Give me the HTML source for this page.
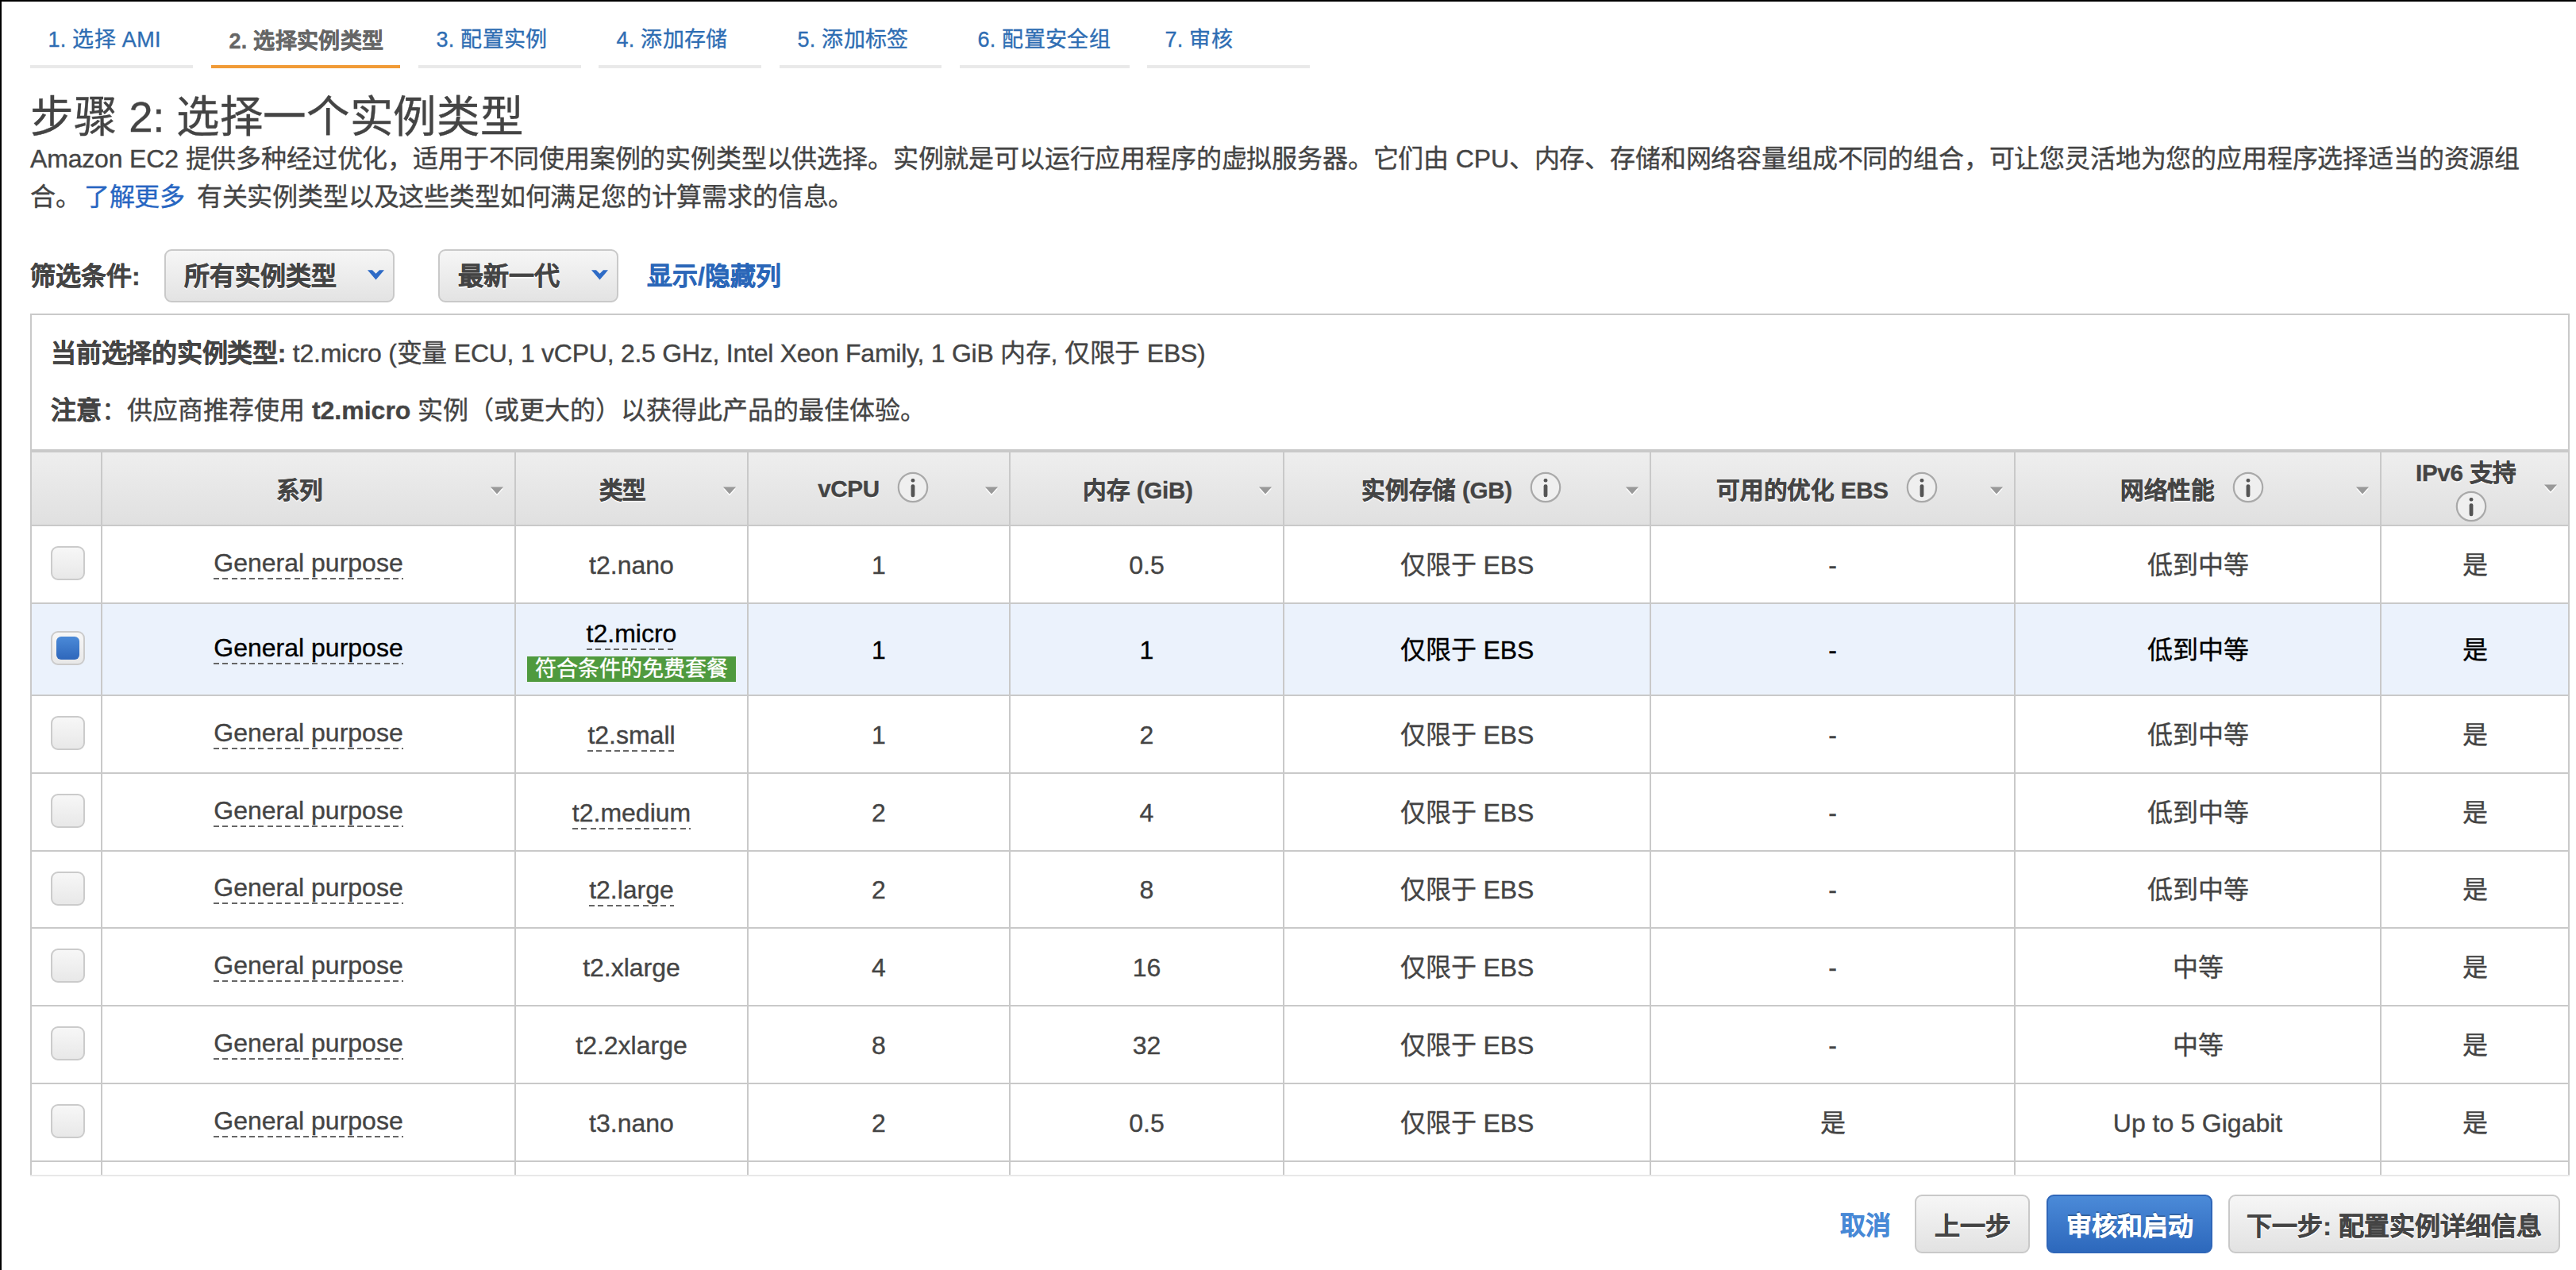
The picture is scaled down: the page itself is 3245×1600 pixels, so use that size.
<!DOCTYPE html>
<html lang="zh-CN"><head><meta charset="utf-8">
<style>
*{box-sizing:border-box;margin:0;padding:0}
html,body{width:3245px;height:1600px;overflow:hidden;background:#fff}
body{font-family:"Liberation Sans",sans-serif;color:#444;position:relative}
#bt{position:absolute;left:0;top:0;width:3245px;height:2px;background:#000;z-index:50}
#bl{position:absolute;left:0;top:0;width:2px;height:1600px;background:#000;z-index:50}
.tab{position:absolute;top:0;height:86px}
.tab .t{position:absolute;left:22.5px;top:31.5px;font-size:27px;letter-spacing:0.3px;line-height:36px;color:#2e6db3;white-space:nowrap}
.tab .u{position:absolute;left:0;right:0;top:82px;height:4px;background:#e9e9e9}
.tab.on .t{color:#666;font-weight:bold;top:33.5px}
.tab.on .u{background:#f19b36}
h2{position:absolute;left:38px;top:112.5px;font-size:54.5px;letter-spacing:-0.3px;line-height:70px;font-weight:normal;color:#444;white-space:nowrap}
.desc{position:absolute;left:38px;top:176px;width:3180px;font-size:32px;letter-spacing:-0.17px;line-height:48px;color:#444}
.desc a{color:#2766c2;text-decoration:none}
.flabel{position:absolute;left:38px;top:324px;font-size:32px;line-height:48px;font-weight:bold;color:#444;white-space:nowrap}
.sel{position:absolute;top:314px;height:67px;border:2px solid #c9c9c9;border-radius:9px;background:linear-gradient(#f6f6f6,#e3e3e3)}
.sel .t{position:absolute;top:8px;font-size:32px;line-height:48px;font-weight:bold;color:#444;white-space:nowrap;text-shadow:0 2px 0 #fff}
.chev{position:absolute;top:24px;width:21px;height:13px}
.showhide{position:absolute;left:815px;top:324px;font-size:32px;line-height:48px;font-weight:bold;color:#2a66b8;white-space:nowrap}
#box{position:absolute;left:38px;top:395px;width:3199px;height:1085px;border:2px solid #c9c9c9;border-bottom:0}
#boxb{position:absolute;left:38px;top:1480px;width:3199px;height:2px;background:#e8e8e8}
.info{position:absolute;left:64px;font-size:32px;line-height:48px;color:#444;white-space:nowrap}
#thead{position:absolute;left:40px;top:570px;width:3195px;height:91px;background:linear-gradient(#eeeeee,#e0e0e0)}
#theadt{position:absolute;left:40px;top:566px;width:3195px;height:4px;background:#c9c9c9}
#theadb{position:absolute;left:40px;top:661px;width:3195px;height:2px;background:#c9c9c9}
.hc{position:absolute;top:570px;height:91px;display:flex;align-items:center;justify-content:center;padding-right:22px;font-size:29.6px;letter-spacing:-0.3px;font-weight:bold;color:#444;white-space:nowrap;text-shadow:0 2px 0 rgba(255,255,255,.6)}
.hc .ico{width:40px;height:40px;margin-left:22px;margin-right:-8px;flex:none;position:relative;top:-1.5px}
.hc .tri{position:absolute;right:14px;top:43px;width:16px;height:12px}
.hc.two{flex-direction:column}
.hc.two .ht{line-height:34px}
.hc.two .hi2{height:40px;position:relative;top:5px;left:6px}
.hc.two .ico{margin:0;top:0}
.hc.two .tri{top:40px}
.row{position:absolute;left:40px;width:3195px}
.row.rsel{background:#ebf2fc}
.row .c{position:absolute;top:0;height:100%;display:flex;align-items:center;justify-content:center;font-size:32px;line-height:37px;padding-top:2px;color:#444;white-space:nowrap}
.row.rsel .c{color:#000}
.ul{position:relative}
.ul:after{content:"";position:absolute;left:0;right:0;bottom:-2px;height:2px;background:repeating-linear-gradient(90deg,#666 0,#666 7px,transparent 7px,transparent 11.3px)}
.mic{display:flex;flex-direction:column;align-items:center}
.badge{margin-top:10px;background:#4f9a3e;color:#fff;font-size:27px;line-height:32px;height:32px;padding:0 10px}
.cb{position:absolute;left:23.5px;top:50%;margin-top:-23px;width:43px;height:43px;border:2px solid #cbcbcb;border-radius:9px;background:linear-gradient(#f7f7f7,#e8e8e8)}
.cb.on:after{content:"";position:absolute;left:5px;top:5px;width:29px;height:29px;border-radius:6px;background:linear-gradient(#4b8ad8,#2e67bb)}
.vl{position:absolute;top:570px;width:2px;height:910px;background:#c9c9c9}
.hl{position:absolute;left:40px;width:3195px;height:2px;background:#c9c9c9}
.btn{position:absolute;top:1505px;height:74px;border:2px solid #c9c9c9;border-radius:9px;background:linear-gradient(#f6f6f6,#e2e2e2);font-size:32px;font-weight:bold;color:#444;display:flex;align-items:center;justify-content:center;white-space:nowrap;text-shadow:0 2px 0 #fff}
.btn.pri{border-color:#2f66b8;background:linear-gradient(#4b8ad8,#2d68bc);color:#fff;text-shadow:0 -2px 0 rgba(0,0,0,.25)}
.cancel{position:absolute;left:2317.5px;top:1520px;font-size:32px;line-height:48px;font-weight:bold;color:#4889d6;white-space:nowrap}
.gp{top:-3px}
.desc a{margin-left:4px;margin-right:6px}
body *{-webkit-text-stroke:0.35px currentColor}

</style></head><body>
<div id="bt"></div><div id="bl"></div>
<div class="tab" style="left:38px;width:205px"><div class="t">1. 选择 AMI</div><div class="u"></div></div>
<div class="tab on" style="left:266px;width:238px"><div class="t">2. 选择实例类型</div><div class="u"></div></div>
<div class="tab" style="left:527px;width:205px"><div class="t">3. 配置实例</div><div class="u"></div></div>
<div class="tab" style="left:754px;width:205px"><div class="t">4. 添加存储</div><div class="u"></div></div>
<div class="tab" style="left:982px;width:204px"><div class="t">5. 添加标签</div><div class="u"></div></div>
<div class="tab" style="left:1209px;width:214px"><div class="t">6. 配置安全组</div><div class="u"></div></div>
<div class="tab" style="left:1445px;width:205px"><div class="t">7. 审核</div><div class="u"></div></div>
<h2>步骤 2: 选择一个实例类型</h2>
<div class="desc">Amazon EC2 提供多种经过优化，适用于不同使用案例的实例类型以供选择。实例就是可以运行应用程序的虚拟服务器。它们由 CPU、内存、存储和网络容量组成不同的组合，可让您灵活地为您的应用程序选择适当的资源组合。<a>了解更多</a> 有关实例类型以及这些类型如何满足您的计算需求的信息。</div>
<div class="flabel">筛选条件:</div>
<div class="sel" style="left:207px;width:290px"><div class="t" style="left:23px">所有实例类型</div><svg class="chev" style="left:254px" viewBox="0 0 21 13"><path d="M0 0.3 L6 0.3 L10.5 4.8 L15 0.3 L21 0.3 L10.5 12.6 Z" fill="#2e6bc6"/></svg></div>
<div class="sel" style="left:552px;width:227px"><div class="t" style="left:23px">最新一代</div><svg class="chev" style="left:190.5px" viewBox="0 0 21 13"><path d="M0 0.3 L6 0.3 L10.5 4.8 L15 0.3 L21 0.3 L10.5 12.6 Z" fill="#2e6bc6"/></svg></div>
<div class="showhide">显示/隐藏列</div>
<div id="box"></div><div id="boxb"></div>
<div class="info" style="top:421px;letter-spacing:-0.25px"><b>当前选择的实例类型:</b> t2.micro (变量 ECU, 1 vCPU, 2.5 GHz, Intel Xeon Family, 1 GiB 内存, 仅限于 EBS)</div>
<div class="info" style="top:493px"><b>注意</b>：供应商推荐使用 <b>t2.micro</b> 实例（或更大的）以获得此产品的最佳体验。</div>
<div id="thead"></div><div id="theadt"></div><div id="theadb"></div>
<div class="hc" style="left:129px;width:519px"><span class="ht">系列</span><svg class="tri" viewBox="0 0 16 12"><path d="M0 2.5 L16 2.5 L8 11.5 Z" fill="#fff"/><path d="M0 0.5 L16 0.5 L8 9.5 Z" fill="#999"/></svg></div>
<div class="hc" style="left:650px;width:291px"><span class="ht">类型</span><svg class="tri" viewBox="0 0 16 12"><path d="M0 2.5 L16 2.5 L8 11.5 Z" fill="#fff"/><path d="M0 0.5 L16 0.5 L8 9.5 Z" fill="#999"/></svg></div>
<div class="hc" style="left:943px;width:328px"><span class="ht">vCPU</span><svg class="ico" viewBox="0 0 40 40"><circle cx="20" cy="20" r="18.2" fill="#efefef" stroke="#a9a9a9" stroke-width="2.2"/><rect x="17.6" y="9" width="4.8" height="4.6" rx="2" fill="#555"/><rect x="17.6" y="16.2" width="4.8" height="16" rx="2.2" fill="#555"/></svg><svg class="tri" viewBox="0 0 16 12"><path d="M0 2.5 L16 2.5 L8 11.5 Z" fill="#fff"/><path d="M0 0.5 L16 0.5 L8 9.5 Z" fill="#999"/></svg></div>
<div class="hc" style="left:1273px;width:343px"><span class="ht">内存 (GiB)</span><svg class="tri" viewBox="0 0 16 12"><path d="M0 2.5 L16 2.5 L8 11.5 Z" fill="#fff"/><path d="M0 0.5 L16 0.5 L8 9.5 Z" fill="#999"/></svg></div>
<div class="hc" style="left:1618px;width:460px"><span class="ht">实例存储 (GB)</span><svg class="ico" viewBox="0 0 40 40"><circle cx="20" cy="20" r="18.2" fill="#efefef" stroke="#a9a9a9" stroke-width="2.2"/><rect x="17.6" y="9" width="4.8" height="4.6" rx="2" fill="#555"/><rect x="17.6" y="16.2" width="4.8" height="16" rx="2.2" fill="#555"/></svg><svg class="tri" viewBox="0 0 16 12"><path d="M0 2.5 L16 2.5 L8 11.5 Z" fill="#fff"/><path d="M0 0.5 L16 0.5 L8 9.5 Z" fill="#999"/></svg></div>
<div class="hc" style="left:2080px;width:457px"><span class="ht">可用的优化 EBS</span><svg class="ico" viewBox="0 0 40 40"><circle cx="20" cy="20" r="18.2" fill="#efefef" stroke="#a9a9a9" stroke-width="2.2"/><rect x="17.6" y="9" width="4.8" height="4.6" rx="2" fill="#555"/><rect x="17.6" y="16.2" width="4.8" height="16" rx="2.2" fill="#555"/></svg><svg class="tri" viewBox="0 0 16 12"><path d="M0 2.5 L16 2.5 L8 11.5 Z" fill="#fff"/><path d="M0 0.5 L16 0.5 L8 9.5 Z" fill="#999"/></svg></div>
<div class="hc" style="left:2539px;width:459px"><span class="ht">网络性能</span><svg class="ico" viewBox="0 0 40 40"><circle cx="20" cy="20" r="18.2" fill="#efefef" stroke="#a9a9a9" stroke-width="2.2"/><rect x="17.6" y="9" width="4.8" height="4.6" rx="2" fill="#555"/><rect x="17.6" y="16.2" width="4.8" height="16" rx="2.2" fill="#555"/></svg><svg class="tri" viewBox="0 0 16 12"><path d="M0 2.5 L16 2.5 L8 11.5 Z" fill="#fff"/><path d="M0 0.5 L16 0.5 L8 9.5 Z" fill="#999"/></svg></div>
<div class="hc two" style="left:3000px;width:235px"><div class="ht">IPv6 支持</div><div class="hi2"><svg class="ico" viewBox="0 0 40 40"><circle cx="20" cy="20" r="18.2" fill="#efefef" stroke="#a9a9a9" stroke-width="2.2"/><rect x="17.6" y="9" width="4.8" height="4.6" rx="2" fill="#555"/><rect x="17.6" y="16.2" width="4.8" height="16" rx="2.2" fill="#555"/></svg></div><svg class="tri" viewBox="0 0 16 12"><path d="M0 2.5 L16 2.5 L8 11.5 Z" fill="#fff"/><path d="M0 0.5 L16 0.5 L8 9.5 Z" fill="#999"/></svg></div>
<div class="row" style="top:663px;height:96px"><div class="cb"></div><div class="c" style="left:89px;width:519px"><span class="ul gp">General purpose</span></div><div class="c" style="left:610px;width:291px">t2.nano</div><div class="c" style="left:903px;width:328px">1</div><div class="c" style="left:1233px;width:343px">0.5</div><div class="c" style="left:1578px;width:460px">仅限于 EBS</div><div class="c" style="left:2040px;width:457px">-</div><div class="c" style="left:2499px;width:459px">低到中等</div><div class="c" style="left:2960px;width:235px">是</div></div>
<div class="row rsel" style="top:761px;height:114px"><div class="cb on"></div><div class="c" style="left:89px;width:519px"><span class="ul gp">General purpose</span></div><div class="c" style="left:610px;width:291px"><div class="mic"><span class="ul">t2.micro</span><div class="badge">符合条件的免费套餐</div></div></div><div class="c" style="left:903px;width:328px">1</div><div class="c" style="left:1233px;width:343px">1</div><div class="c" style="left:1578px;width:460px">仅限于 EBS</div><div class="c" style="left:2040px;width:457px">-</div><div class="c" style="left:2499px;width:459px">低到中等</div><div class="c" style="left:2960px;width:235px">是</div></div>
<div class="row" style="top:877px;height:96px"><div class="cb"></div><div class="c" style="left:89px;width:519px"><span class="ul gp">General purpose</span></div><div class="c" style="left:610px;width:291px"><span class="ul">t2.small</span></div><div class="c" style="left:903px;width:328px">1</div><div class="c" style="left:1233px;width:343px">2</div><div class="c" style="left:1578px;width:460px">仅限于 EBS</div><div class="c" style="left:2040px;width:457px">-</div><div class="c" style="left:2499px;width:459px">低到中等</div><div class="c" style="left:2960px;width:235px">是</div></div>
<div class="row" style="top:975px;height:96px"><div class="cb"></div><div class="c" style="left:89px;width:519px"><span class="ul gp">General purpose</span></div><div class="c" style="left:610px;width:291px"><span class="ul">t2.medium</span></div><div class="c" style="left:903px;width:328px">2</div><div class="c" style="left:1233px;width:343px">4</div><div class="c" style="left:1578px;width:460px">仅限于 EBS</div><div class="c" style="left:2040px;width:457px">-</div><div class="c" style="left:2499px;width:459px">低到中等</div><div class="c" style="left:2960px;width:235px">是</div></div>
<div class="row" style="top:1073px;height:95px"><div class="cb"></div><div class="c" style="left:89px;width:519px"><span class="ul gp">General purpose</span></div><div class="c" style="left:610px;width:291px"><span class="ul">t2.large</span></div><div class="c" style="left:903px;width:328px">2</div><div class="c" style="left:1233px;width:343px">8</div><div class="c" style="left:1578px;width:460px">仅限于 EBS</div><div class="c" style="left:2040px;width:457px">-</div><div class="c" style="left:2499px;width:459px">低到中等</div><div class="c" style="left:2960px;width:235px">是</div></div>
<div class="row" style="top:1170px;height:96px"><div class="cb"></div><div class="c" style="left:89px;width:519px"><span class="ul gp">General purpose</span></div><div class="c" style="left:610px;width:291px">t2.xlarge</div><div class="c" style="left:903px;width:328px">4</div><div class="c" style="left:1233px;width:343px">16</div><div class="c" style="left:1578px;width:460px">仅限于 EBS</div><div class="c" style="left:2040px;width:457px">-</div><div class="c" style="left:2499px;width:459px">中等</div><div class="c" style="left:2960px;width:235px">是</div></div>
<div class="row" style="top:1268px;height:96px"><div class="cb"></div><div class="c" style="left:89px;width:519px"><span class="ul gp">General purpose</span></div><div class="c" style="left:610px;width:291px">t2.2xlarge</div><div class="c" style="left:903px;width:328px">8</div><div class="c" style="left:1233px;width:343px">32</div><div class="c" style="left:1578px;width:460px">仅限于 EBS</div><div class="c" style="left:2040px;width:457px">-</div><div class="c" style="left:2499px;width:459px">中等</div><div class="c" style="left:2960px;width:235px">是</div></div>
<div class="row" style="top:1366px;height:96px"><div class="cb"></div><div class="c" style="left:89px;width:519px"><span class="ul gp">General purpose</span></div><div class="c" style="left:610px;width:291px">t3.nano</div><div class="c" style="left:903px;width:328px">2</div><div class="c" style="left:1233px;width:343px">0.5</div><div class="c" style="left:1578px;width:460px">仅限于 EBS</div><div class="c" style="left:2040px;width:457px">是</div><div class="c" style="left:2499px;width:459px">Up to 5 Gigabit</div><div class="c" style="left:2960px;width:235px">是</div></div>
<div class="vl" style="left:127px"></div><div class="vl" style="left:648px"></div><div class="vl" style="left:941px"></div><div class="vl" style="left:1271px"></div><div class="vl" style="left:1616px"></div><div class="vl" style="left:2078px"></div><div class="vl" style="left:2537px"></div><div class="vl" style="left:2998px"></div><div class="hl" style="top:759px"></div><div class="hl" style="top:875px"></div><div class="hl" style="top:973px"></div><div class="hl" style="top:1071px"></div><div class="hl" style="top:1168px"></div><div class="hl" style="top:1266px"></div><div class="hl" style="top:1364px"></div><div class="hl" style="top:1462px"></div>
<div class="cancel">取消</div>
<div class="btn" style="left:2412px;width:145px">上一步</div>
<div class="btn pri" style="left:2578px;width:209px">审核和启动</div>
<div class="btn" style="left:2807px;width:418px">下一步: 配置实例详细信息</div>
</body></html>
